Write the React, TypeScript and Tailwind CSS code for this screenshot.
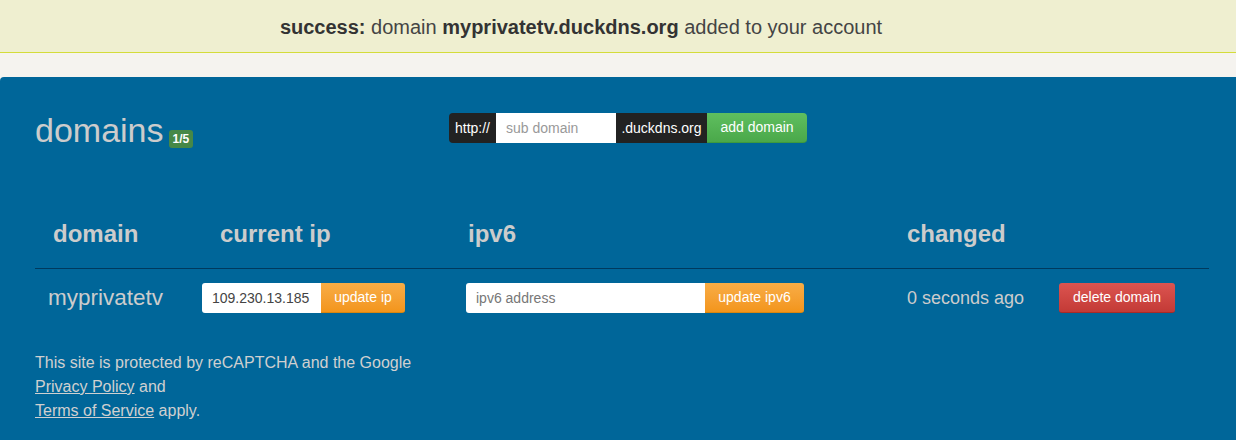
import React from 'react';

const domains = [{ name: 'myprivatetv', ip: '109.230.13.185', changed: '0 seconds ago' }];

export default function App() {
  return (
    <div className="h-[440px] overflow-hidden bg-[#f5f3ef] font-['Liberation_Sans',Arial,sans-serif]">
      {/* Alert */}
      <div className="flex h-[53px] items-center justify-center border-b border-[#d4dc3a] bg-[#efefd0] pt-px pr-[74px] text-[20px] text-[#444]">
        <span>
          <b className="text-[#333]">success:</b> domain <b className="text-[#333]">myprivatetv.duckdns.org</b> added to your account
        </span>
      </div>

      <div className="mt-[24px] min-h-[400px] rounded-tl-[4px] bg-[#006699] px-[35px] pt-[25px] text-[#cccccc]">
        {/* Title + add form */}
        <div className="flex items-start">
          <div className="flex w-[414px] items-end pt-[8px]">
            <h1 className="text-[34px] leading-[40px]">domains</h1>
            <span className="mb-[2px] ml-[5px] rounded-[3px] bg-[#468847] px-[4px] text-[12px] leading-[18px] font-bold text-white">
              1/5
            </span>
          </div>
          <div className="mt-[11px] flex h-[30px] text-[14px]">
            <span className="flex w-[47px] items-center justify-center rounded-l-[4px] bg-[#222] text-white">http://</span>
            <input
              className="w-[120px] bg-white px-[10px] text-[#555] outline-none placeholder:text-[#999]"
              placeholder="sub domain"
            />
            <span className="flex w-[91px] items-center justify-center bg-[#222] text-white">.duckdns.org</span>
            <button className="w-[100px] rounded-r-[4px] border-b border-[#3e9a3e] bg-gradient-to-b from-[#5fbf5f] to-[#4aa84a] text-white">
              add domain
            </button>
          </div>
        </div>

        {/* Table */}
        <div className="mt-[69px] w-[1174px]">
          <div className="flex h-[50px] items-center border-b border-[#003a5e] pb-[20px] text-[24px] font-bold">
            <div className="w-[167px] pl-[18px]">domain</div>
            <div className="w-[264px] pl-[18px]">current ip</div>
            <div className="w-[441px] pl-[2px]">ipv6</div>
            <div>changed</div>
          </div>
          {domains.map(d => (
            <div key={d.name} className="flex h-[58px] items-center">
              <div className="w-[167px] pl-[13px] text-[22.5px]">{d.name}</div>
              <div className="flex w-[264px] h-[30px]">
                <input
                  className="w-[119px] rounded-l-[3px] bg-white px-[10px] text-[14px] text-[#444] outline-none"
                  defaultValue={d.ip}
                />
                <button className="w-[84px] rounded-r-[3px] border-b border-[#d8860f] bg-gradient-to-b from-[#f8ad45] to-[#f3951a] text-[14px] text-white">
                  update ip
                </button>
              </div>
              <div className="flex h-[30px] w-[441px]">
                <input
                  className="w-[239px] rounded-l-[3px] bg-white px-[10px] text-[14px] text-[#444] outline-none placeholder:text-[#777]"
                  placeholder="ipv6 address"
                />
                <button className="w-[99px] rounded-r-[3px] border-b border-[#d8860f] bg-gradient-to-b from-[#f8ad45] to-[#f3951a] text-[14px] text-white">
                  update ipv6
                </button>
              </div>
              <div className="w-[152px] text-[18px]">{d.changed}</div>
              <button className="h-[30px] w-[116px] rounded-[3px] border-b border-[#a82a27] bg-gradient-to-b from-[#dc5450] to-[#c33a36] text-[14px] text-white">
                delete domain
              </button>
            </div>
          ))}
        </div>

        {/* Footer */}
        <p className="mt-[24px] text-[16px] leading-[24px] text-[#d0d0d0]">
          This site is protected by reCAPTCHA and the Google
          <br />
          <a className="underline">Privacy Policy</a> and
          <br />
          <a className="underline">Terms of Service</a> apply.
        </p>
      </div>
    </div>
  );
}
